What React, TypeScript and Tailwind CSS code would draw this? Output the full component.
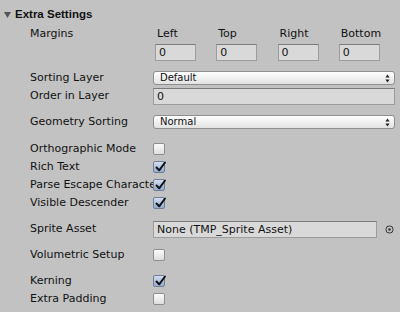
import React from 'react'

const font = "font-['DejaVu_Sans',Verdana,sans-serif]"

function Check({ on }: { on?: boolean }) {
  if (!on) {
    return <div className="w-[12px] h-[12px] rounded-[2px] border border-[#8e8e8e] bg-gradient-to-b from-[#fbfbfb] to-[#dedede]" />
  }
  return (
    <div className="relative w-[12px] h-[12px] rounded-[2px] border border-[#6f7f98] bg-gradient-to-b from-[#d2deef] to-[#94abcc]">
      <svg className="absolute left-[1px] -top-[1px]" width="12" height="12" viewBox="0 0 12 12">
        <path d="M1.5 6.5 L4.2 9.3 L10 1.5" fill="none" stroke="#10141c" strokeWidth="2" strokeLinecap="round" strokeLinejoin="round" />
      </svg>
    </div>
  )
}

function Popup({ value }: { value: string }) {
  return (
    <div className="flex-1 h-[14px] rounded-[3px] border border-[#8f8f8f] bg-gradient-to-b from-[#ffffff] to-[#e2e2e2] flex items-center justify-between pl-[6px] pr-[4px] text-[10px] leading-none">
      <span>{value}</span>
      <svg width="5" height="9" viewBox="0 0 5 9">
        <path d="M2.5 0.5 L4.6 3.6 L0.4 3.6 Z" fill="#222" />
        <path d="M2.5 8.5 L4.6 5.4 L0.4 5.4 Z" fill="#222" />
      </svg>
    </div>
  )
}

function Field({ value, className = '' }: { value: string; className?: string }) {
  return (
    <div className={`h-[17px] border border-[#9c9c9c] border-t-[#7c7c7c] bg-[#d9d9d9] flex items-center pl-[3px] text-[11px] leading-none whitespace-nowrap overflow-hidden ${className}`}>
      {value}
    </div>
  )
}

function Row({ label, h, children }: { label: string; h: string; children?: React.ReactNode }) {
  return (
    <div className={`flex items-center pl-[30px] pr-[5px] ${h}`}>
      <div className="w-[123px] shrink-0 overflow-hidden whitespace-nowrap">{label}</div>
      {children}
    </div>
  )
}

export default function App() {
  return (
    <div className={`w-[400px] h-[312px] overflow-hidden bg-[#c2c2c2] text-[11px] text-[#111] ${font}`}>
      <div className="h-[27px] pt-[3px] flex items-center pl-[4px] gap-[4px]">
        <svg width="7" height="6" viewBox="0 0 7 6">
          <path d="M0 0 L7 0 L3.5 6 Z" fill="#555" />
        </svg>
        <span className="font-bold font-['Liberation_Sans',Arial,sans-serif] text-[11.5px]">Extra Settings</span>
      </div>

      <div className="flex pl-[30px]">
        <div className="w-[125px] h-[14px] flex items-center">Margins</div>
        <div className="grid grid-cols-4 w-[245px]">
          {['Left', 'Top', 'Right', 'Bottom'].map((s) => (
            <div key={s}>
              <div className="h-[14px] pl-[2px] flex items-center">{s}</div>
              <Field value="0" className="mt-[3px] w-[41px]" />
            </div>
          ))}
        </div>
      </div>

      <div className="h-[10px]" />
      <Row label="Sorting Layer" h="h-[14px]">
        <Popup value="Default" />
      </Row>
      <div className="h-[3px]" />
      <Row label="Order in Layer" h="h-[16px]">
        <Field value="0" className="flex-1 h-[16px]" />
      </Row>
      <div className="h-[11px]" />
      <Row label="Geometry Sorting" h="h-[14px]">
        <Popup value="Normal" />
      </Row>

      <div className="h-[11px]" />
      <Row label="Orthographic Mode" h="h-[18px]">
        <Check />
      </Row>
      <Row label="Rich Text" h="h-[18px]">
        <Check on />
      </Row>
      <Row label="Parse Escape Characters" h="h-[18px]">
        <Check on />
      </Row>
      <Row label="Visible Descender" h="h-[18px]">
        <Check on />
      </Row>

      <div className="h-[8px]" />
      <Row label="Sprite Asset" h="h-[18px]">
        <Field value="None (TMP_Sprite Asset)" className="w-[224px] h-[16px]" />
        <svg className="ml-[8px]" width="9" height="9" viewBox="0 0 9 9">
          <circle cx="4.5" cy="4.5" r="3.6" fill="none" stroke="#333" strokeWidth="1" />
          <circle cx="4.5" cy="4.5" r="1.3" fill="#333" />
        </svg>
      </Row>
      <div className="h-[8px]" />
      <Row label="Volumetric Setup" h="h-[18px]">
        <Check />
      </Row>
      <div className="h-[8px]" />
      <Row label="Kerning" h="h-[18px]">
        <Check on />
      </Row>
      <Row label="Extra Padding" h="h-[18px]">
        <Check />
      </Row>
    </div>
  )
}
